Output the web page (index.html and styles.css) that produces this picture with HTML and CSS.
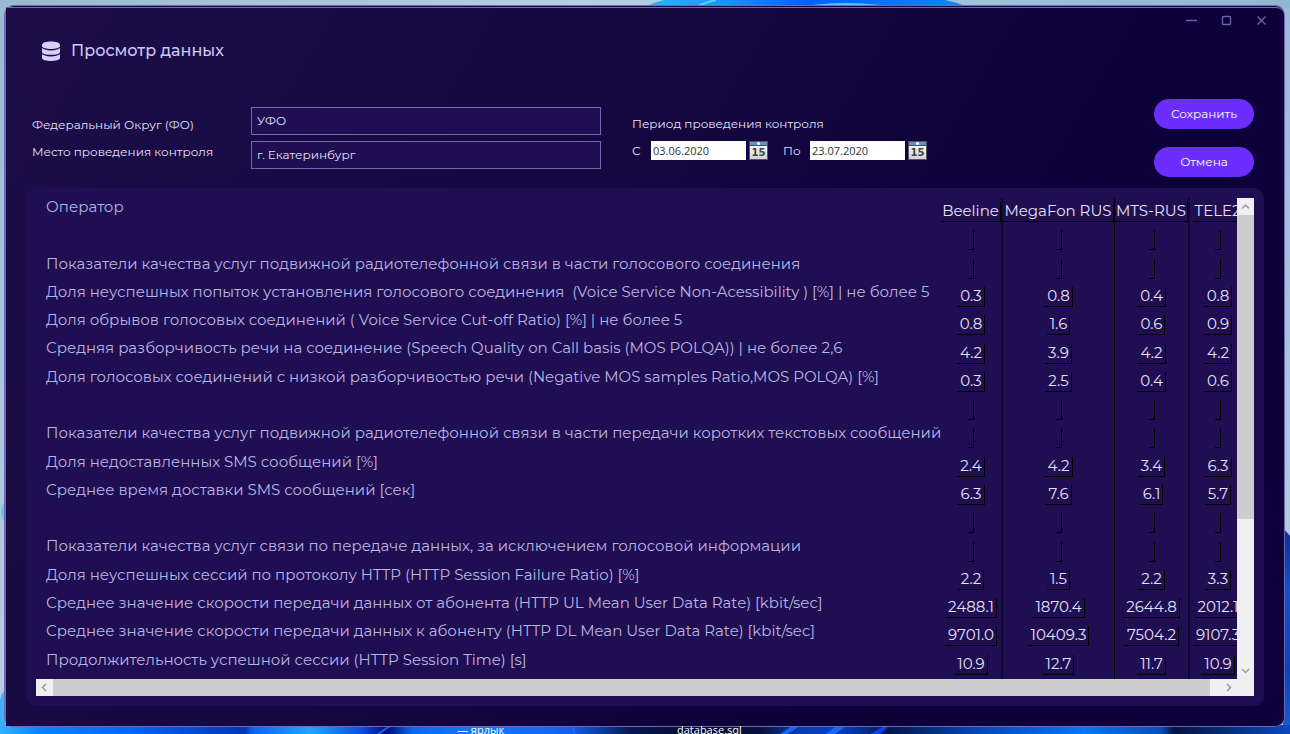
FILE: index.html
```html
<!DOCTYPE html>
<html lang="ru">
<head>
<meta charset="utf-8">
<title>Просмотр данных</title>
<link rel="stylesheet" href="styles.css">
</head>
<body>
<div class="desktop">
  <svg class="wallpaper" viewBox="0 0 1290 734" preserveAspectRatio="none" aria-hidden="true">
    <defs>
      <linearGradient id="sky" x1="0" x2="0" y1="0" y2="1"><stop offset="0" stop-color="#9abbd3"/><stop offset="1" stop-color="#b9cfe6"/></linearGradient>
      <linearGradient id="skytop"><stop offset="0" stop-color="#98bad2"/><stop offset=".45" stop-color="#b6cfe0"/><stop offset="1" stop-color="#8fb6d2"/></linearGradient>
      <linearGradient id="petal"><stop offset="0" stop-color="#35b0ff"/><stop offset=".25" stop-color="#2090ff"/><stop offset=".5" stop-color="#0060ff"/><stop offset="1" stop-color="#1486f4"/></linearGradient>
      <linearGradient id="floor">
        <stop offset="0" stop-color="#36b0ff"/><stop offset=".03" stop-color="#0a84ff"/><stop offset=".1" stop-color="#0068f8"/>
        <stop offset=".19" stop-color="#0036b4"/><stop offset=".195" stop-color="#0a62f0"/><stop offset=".24" stop-color="#1ea8ff"/>
        <stop offset=".28" stop-color="#0a50e0"/><stop offset=".3" stop-color="#020a78"/><stop offset=".32" stop-color="#0a68f0"/>
        <stop offset=".37" stop-color="#0f7cff"/><stop offset=".44" stop-color="#1460f0"/><stop offset=".49" stop-color="#061850"/>
        <stop offset=".55" stop-color="#040a28"/><stop offset=".59" stop-color="#05123c"/><stop offset=".62" stop-color="#0a3cb0"/>
        <stop offset=".65" stop-color="#0640c8"/><stop offset=".69" stop-color="#04164c"/><stop offset=".76" stop-color="#0648b8"/>
        <stop offset=".84" stop-color="#0078f8"/><stop offset=".9" stop-color="#0650b8"/><stop offset=".91" stop-color="#041440"/>
        <stop offset="1" stop-color="#0b48c0"/>
      </linearGradient>
      <linearGradient id="edge" x1="0" x2="0" y1="0" y2="1"><stop offset="0" stop-color="#0a2f90"/><stop offset=".3" stop-color="#1450d0"/><stop offset=".7" stop-color="#0d43b8"/><stop offset="1" stop-color="#1260d8"/></linearGradient>
    </defs>
    <rect width="1290" height="734" fill="url(#sky)"/>
    <rect width="1290" height="8" fill="url(#skytop)"/>
    <path d="M647 6 Q655 2 664 0 H945 Q955 2 965 6Z" fill="url(#petal)"/>
    <path d="M698 6 Q706 2 716 0" fill="none" stroke="#6cc8ff" stroke-width="2"/>
    <path d="M812 5 Q845 1 880 5Z" fill="#5cc4ff"/>
    <ellipse cx="5" cy="512" rx="4" ry="9" fill="#5fc6ee"/>
    <path d="M0 700 Q1 692 8 688 V734 H0Z" fill="#3fb0fa"/>
    <path d="M1283 528 L1290 536 V734 H1283Z" fill="url(#edge)"/>
    <rect y="725" width="1290" height="9" fill="url(#floor)"/>
    <path d="M780 734 L792 726 H800 L788 734Z M826 734 L836 726 H846 L835 734Z" fill="#1668f0"/>
    <path d="M884 726 H889 L880 734 H870Z" fill="#0a42f0"/>
    <path d="M378 734 L390 726 M552 726 L556 734 M572 726 L575 734" fill="none" stroke="#1b68e8" stroke-width="2"/>
  </svg>

  <main class="window">
    <div class="surface">
      <div class="titlebar">
        <button class="win-btn" type="button" aria-label="Свернуть"><svg width="12" height="12" viewBox="0 0 12 12"><path d="M0 6.500H11"/></svg></button>
        <button class="win-btn" type="button" aria-label="Развернуть"><svg width="12" height="12" viewBox="0 0 12 12"><rect x="1.500" y="2.500" width="8" height="8" rx="1"/></svg></button>
        <button class="win-btn" type="button" aria-label="Закрыть"><svg width="12" height="12" viewBox="0 0 12 12"><path d="M1.500 2.500L9.500 10.500M9.500 2.500L1.500 10.500"/></svg></button>
      </div>

      <header class="heading">
        <svg width="20" height="22" viewBox="0 0 20 22" aria-hidden="true">
          <path d="M1 5C1 .4 19 .4 19 5V6C19 10 1 10 1 6Z M1 8C4 11.300 16 11.300 19 8V12C19 15.800 1 15.800 1 12Z M1 14C4 17.200 16 17.200 19 14V18C19 22 1 22 1 18Z"/>
        </svg>
        <h1>Просмотр данных</h1>
      </header>

      <form class="filters">
        <div class="labels">
          <label for="district">Федеральный Округ (ФО)</label>
          <label for="place">Место проведения контроля</label>
        </div>
        <div class="fields">
          <input id="district" type="text" value="УФО">
          <input id="place" type="text" value="г. Екатеринбург">
        </div>
        <fieldset class="period">
          <legend>Период проведения контроля</legend>
          <div class="dates">
            <label for="from">С</label>
            <input id="from" type="text" value="03.06.2020">
            <button class="cal" type="button" aria-label="Выбрать начальную дату"><span class="cal-top"></span><span class="cal-day">15</span></button>
            <label class="to" for="to">По</label>
            <input id="to" type="text" value="23.07.2020">
            <button class="cal" type="button" aria-label="Выбрать конечную дату"><span class="cal-top"></span><span class="cal-day">15</span></button>
          </div>
        </fieldset>
        <div class="actions">
          <button class="pill" type="button">Сохранить</button>
          <button class="pill" type="button">Отмена</button>
        </div>
      </form>

      <section class="panel">
        <div class="viewport">
          <table>
            <colgroup><col class="c-name"><col class="c-beeline"><col class="c-megafon"><col class="c-mts"><col class="c-tele2"></colgroup>
            <tr><th scope="col">Оператор</th><th scope="col"><span class="wide">Beeline</span></th><th scope="col"><span class="wide">MegaFon RUS</span></th><th scope="col"><span class="wide">MTS-RUS</span></th><th scope="col"><span class="wide last">TELE2</span></th></tr>
            <tr><th></th><td><span></span></td><td><span></span></td><td><span></span></td><td><span></span></td></tr>
            <tr><th scope="row">Показатели качества услуг подвижной радиотелефонной связи в части голосового соединения</th><td><span></span></td><td><span></span></td><td><span></span></td><td><span></span></td></tr>
            <tr><th scope="row">Доля неуспешных попыток установления голосового соединения&nbsp; (Voice Service Non-Acessibility ) [%] | не более 5</th><td><span>0.3</span></td><td><span>0.8</span></td><td><span>0.4</span></td><td><span>0.8</span></td></tr>
            <tr><th scope="row">Доля обрывов голосовых соединений ( Voice Service Cut-off Ratio) [%] | не более 5</th><td><span>0.8</span></td><td><span>1.6</span></td><td><span>0.6</span></td><td><span>0.9</span></td></tr>
            <tr><th scope="row">Средняя разборчивость речи на соединение (Speech Quality on Call basis (MOS POLQA)) | не более 2,6</th><td><span>4.2</span></td><td><span>3.9</span></td><td><span>4.2</span></td><td><span>4.2</span></td></tr>
            <tr><th scope="row">Доля голосовых соединений с низкой разборчивостью речи (Negative MOS samples Ratio,MOS POLQA) [%]</th><td><span>0.3</span></td><td><span>2.5</span></td><td><span>0.4</span></td><td><span>0.6</span></td></tr>
            <tr><th></th><td><span></span></td><td><span></span></td><td><span></span></td><td><span></span></td></tr>
            <tr><th scope="row">Показатели качества услуг подвижной радиотелефонной связи в части передачи коротких текстовых сообщений</th><td><span></span></td><td><span></span></td><td><span></span></td><td><span></span></td></tr>
            <tr><th scope="row">Доля недоставленных SMS сообщений [%]</th><td><span>2.4</span></td><td><span>4.2</span></td><td><span>3.4</span></td><td><span>6.3</span></td></tr>
            <tr><th scope="row">Среднее время доставки SMS сообщений [сек]</th><td><span>6.3</span></td><td><span>7.6</span></td><td><span>6.1</span></td><td><span>5.7</span></td></tr>
            <tr><th></th><td><span></span></td><td><span></span></td><td><span></span></td><td><span></span></td></tr>
            <tr><th scope="row">Показатели качества услуг связи по передаче данных, за исключением голосовой информации</th><td><span></span></td><td><span></span></td><td><span></span></td><td><span></span></td></tr>
            <tr><th scope="row">Доля неуспешных сессий по протоколу HTTP (HTTP Session Failure Ratio) [%]</th><td><span>2.2</span></td><td><span>1.5</span></td><td><span>2.2</span></td><td><span>3.3</span></td></tr>
            <tr><th scope="row">Среднее значение скорости передачи данных от абонента (HTTP UL Mean User Data Rate) [kbit/sec]</th><td><span>2488.1</span></td><td><span>1870.4</span></td><td><span>2644.8</span></td><td><span>2012.1</span></td></tr>
            <tr><th scope="row">Среднее значение скорости передачи данных к абоненту (HTTP DL Mean User Data Rate) [kbit/sec]</th><td><span>9701.0</span></td><td><span>10409.3</span></td><td><span>7504.2</span></td><td><span>9107.3</span></td></tr>
            <tr><th scope="row">Продолжительность успешной сессии (HTTP Session Time) [s]</th><td><span>10.9</span></td><td><span>12.7</span></td><td><span>11.7</span></td><td><span>10.9</span></td></tr>
          </table>
        </div>
        <div class="bar bar-v">
          <button type="button" aria-label="Вверх"><svg width="9" height="9" viewBox="0 0 9 9"><path d="M1 6.500L4.500 3L8 6.500"/></svg></button>
          <div class="track"><div class="thumb"></div></div>
          <button type="button" aria-label="Вниз"><svg width="9" height="9" viewBox="0 0 9 9"><path d="M1 3L4.500 6.500L8 3"/></svg></button>
        </div>
        <div class="bar bar-h">
          <button type="button" aria-label="Влево"><svg width="9" height="9" viewBox="0 0 9 9"><path d="M6 1L2.500 4.500L6 8"/></svg></button>
          <div class="track"><div class="thumb"></div></div>
          <button type="button" aria-label="Вправо"><svg width="9" height="9" viewBox="0 0 9 9"><path d="M3 1L6.500 4.500L3 8"/></svg></button>
        </div>
        <div class="corner"></div>
      </section>
    </div>
  </main>
  <span class="shortcut shortcut-link">— ярлык</span>
  <span class="shortcut shortcut-db">database.sql</span>
</div>
</body>
</html>
```
FILE: styles.css
```css
* { box-sizing: border-box; }
body { margin: 0; font-family: Montserrat, Inter, sans-serif; font-size: 12px; color: #e4e0f8; }
button, input { font: inherit; color: inherit; }
button { padding: 0; border: 0; background: none; }
svg { display: block; }

.desktop { position: relative; z-index: 0; display: grid; min-height: 100vh; padding: 5px 5px 7px 4px; overflow: hidden; }
.wallpaper { position: absolute; inset: 0; z-index: -1; width: 100%; height: 100%; }
.shortcut { position: absolute; bottom: -4px; font: 11px/16px "Open Sans", sans-serif; color: #fff; }
.shortcut-link { left: 457px; }
.shortcut-db { left: 677px; }

.window { display: grid; min-width: 0; padding-top: 1px; background: #140840; border: 1px solid #7068b4; border-left-width: 2px; border-radius: 10px; }
.surface { display: flex; flex-direction: column; min-width: 0; border-top: 1px solid #7068b4; border-radius: 0 8px 9px 0; background: linear-gradient(120deg, #1c0d48 0%, #150840 40%, #0d003a 75%, #0d003c 100%); }

.titlebar { display: flex; justify-content: flex-end; height: 24px; padding-right: 5px; }
.win-btn { display: grid; place-items: center; width: 35px; }
.win-btn svg { fill: none; stroke: #6a62b0; stroke-width: 1.4; }

.heading { display: flex; align-items: center; gap: 10px; height: 38px; padding-left: 35px; }
.heading svg { fill: #d6cff8; }
.heading h1 { margin: 0; font-size: 16px; font-weight: 500; line-height: 20px; color: #cfc6f4; }

.filters { display: flex; align-items: flex-start; margin: 29px 30px 11px 26px; }
.labels { display: grid; width: 219px; padding-top: 12px; line-height: 27px; }
.fields { display: grid; gap: 6px; flex: 0 1 350px; padding-top: 8px; }
.fields input { width: 100%; height: 28px; padding: 0 5px 2px; border: 1px solid #7068b4; background: #200e52; }
.period { margin: 0 0 0 31px; padding: 16px 0 0; border: 0; }
.period legend { float: left; padding: 0; line-height: 18px; }
.dates { display: flex; align-items: center; clear: both; padding-top: 8px; }
.dates label { width: 19px; line-height: 18px; }
.dates .to { width: 27px; margin-left: 15px; }
.dates input { width: 95px; height: 19px; margin-right: 3px; padding: 0 2px; border: 0; background: #fff; color: #333; font: 11px "Open Sans", sans-serif; }
.cal { display: flex; flex-direction: column; width: 19px; height: 19px; border: 1px solid #55565e; background: linear-gradient(#fff, #cfd2d6); }
.cal-top { height: 4px; background: radial-gradient(circle at 50% 50%, #fff 1px, transparent 2px), #5b93c8; border-bottom: 1px solid #44525f; }
.cal-day { font: bold 10px/13px "DejaVu Sans", sans-serif; color: #444; }
.actions { display: grid; gap: 18px; margin-left: auto; }
.pill { width: 100px; height: 30px; padding-bottom: 2px; border-radius: 15px; background: #6c2eff; color: #fff; }

.panel { display: grid; flex: 1; grid-template: minmax(0, 1fr) 17px / minmax(0, 1fr) 17px; min-height: 501px; margin: 0 20px 20px; padding: 10px; border-radius: 10px; background: #200e52; }
.viewport { overflow: hidden; }
table { width: 100%; min-width: 1210px; height: 100%; table-layout: fixed; border-collapse: separate; border-spacing: 0; font-size: 15px; line-height: 18px; white-space: nowrap; }
.c-beeline { width: 62px; }
.c-megafon { width: 112px; }
.c-mts { width: 75px; }
.c-tele2 { width: 56px; }
th, td { padding: 0; text-align: center; font-weight: 400; vertical-align: middle; border-right: 2px solid #110630; }
tr > :nth-child(3) { border-right: 1px solid #000; }
tr > :last-child { border-right: 0; }
tr > :first-child { padding-left: 10px; border-right: 0; text-align: left; vertical-align: top; color: #bab4e2; }
tr > * > span { display: block; width: fit-content; height: 20px; margin: 0 auto; padding: 0 2px 0 3px; border: solid #000; border-width: 0 1px 1px 0; }
tr > * > .wide { width: auto; padding: 0; }
tr > * > .last { margin: 0 3px; }

.bar { display: flex; background: #f0f0f0; }
.bar-v { flex-direction: column; }
.bar button { display: grid; place-items: center; flex: 0 0 17px; height: 17px; }
.bar svg { fill: none; stroke: #9a9a9a; stroke-width: 1.5; }
.track { flex: 1; }
.thumb { background: #cdcdcd; }
.bar-v .thumb { height: 68%; }
.bar-h .thumb { height: 17px; margin-right: 10px; }
.corner { background: #f0f0f0; }
```
